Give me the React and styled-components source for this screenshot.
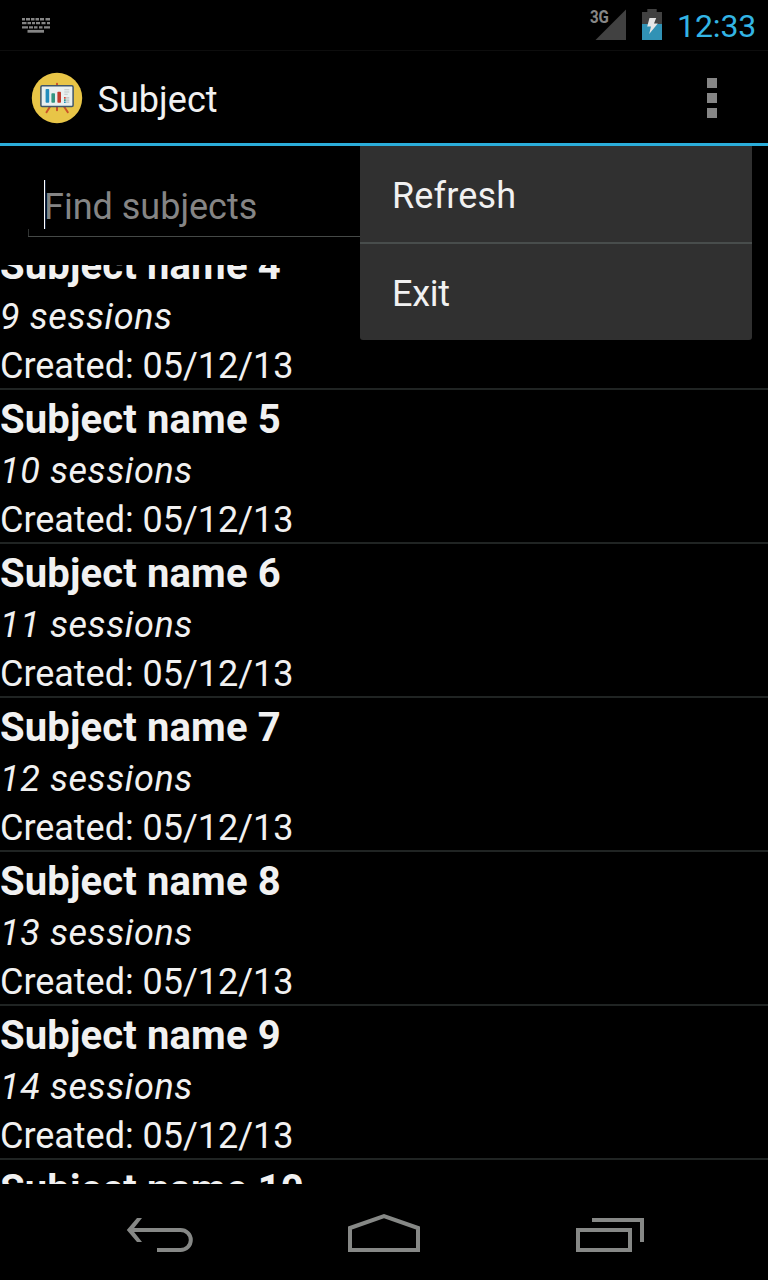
import React from "react";
import styled, { createGlobalStyle } from "styled-components";

const GlobalStyle = createGlobalStyle`
  body { margin: 0; background: #000; }
  * { box-sizing: border-box; }
`;

const Screen = styled.div`
  width: 768px;
  height: 1280px;
  display: flex;
  flex-direction: column;
  overflow: hidden;
  background: #000;
  color: #f1f1f1;
  font-family: Roboto, "Liberation Sans", sans-serif;
  font-size: 36px;
  line-height: 48px;
  white-space: nowrap;
`;

const StatusBar = styled.header`
  height: 51px;
  flex: none;
  display: flex;
  justify-content: space-between;
  border-bottom: 1px solid #0d0d0d;
  padding: 0 12px 0 22px;
`;

const StatusGroup = styled.div`
  display: flex;
  align-items: flex-start;
`;

const KeyboardIcon = styled.svg`
  display: block;
  margin-top: 17px;
`;

const Signal = styled.div`
  position: relative;
  width: 38px;
  height: 32px;
  margin: 9px 15px 0 0;
`;

const SignalIcon = styled.svg`
  display: block;
`;

const NetworkType = styled.span`
  position: absolute;
  left: 0.5px;
  top: -1px;
  font-size: 18px;
  line-height: 18px;
  font-weight: 700;
  letter-spacing: -0.2px;
  transform: scaleX(0.84);
  transform-origin: left;
  color: #868686;
`;

const BatteryIcon = styled.svg`
  display: block;
  margin: 9px 15px 0 0;
`;

const Clock = styled.time`
  width: 79px;
  font-size: 32px;
  line-height: 52px;
  letter-spacing: -0.1px;
  color: #33b5e5;
`;

const ActionBar = styled.div`
  height: 95px;
  flex: none;
  display: flex;
  align-items: flex-start;
  padding: 0 51px 0 31px;
  border-bottom: 3px solid #2badda;
`;

const Logo = styled.svg`
  display: block;
  margin-top: 21px;
`;

const Title = styled.h1`
  flex: 1;
  margin: 25px 0 0 14.5px;
  font-size: 36px;
  font-weight: 400;
  letter-spacing: 0.05px;
`;

const OverflowButton = styled.button`
  display: flex;
  flex-direction: column;
  gap: 5px;
  margin-top: 27px;
  padding: 0;
  border: 0;
  background: none;
`;

const Dot = styled.i`
  width: 10px;
  height: 10px;
  background: #868686;
`;

const Content = styled.main`
  position: relative;
  height: 1038px;
  flex: none;
  display: flex;
  flex-direction: column;
`;

const SearchArea = styled.div`
  height: 119px;
  flex: none;
  padding: 34px 28px 0;
`;

const SearchField = styled.div`
  height: 57px;
  padding-left: 16px;
  display: flex;
  color: #858585;
  background:
    linear-gradient(#454947, #454947) left bottom / 100% 1px no-repeat,
    linear-gradient(#303332, #303332) left bottom / 1px 8px no-repeat,
    linear-gradient(#303332, #303332) right bottom / 1px 8px no-repeat;
`;

const Caret = styled.i`
  width: 1px;
  height: 49px;
  margin-right: -1px;
  background: #fff;
  box-shadow: 1px 0 #17243b;
`;

const Placeholder = styled.span`
  padding-top: 3px;
`;

const List = styled.ul`
  height: 919px;
  margin: 0;
  padding: 0;
  overflow: hidden;
  list-style: none;
`;

const SubjectRow = styled.li`
  height: 154px;
  border-bottom: 2px solid #202423;

  &:first-child {
    margin-top: -29px;
  }
`;

const SubjectName = styled.div`
  height: 57px;
  font-size: 40px;
  line-height: 59px;
  font-weight: 700;
  letter-spacing: 0.14px;
`;

const Sessions = styled.div`
  height: 49px;
  font-style: italic;
  letter-spacing: 0.6px;
`;

const Created = styled.div`
  height: 46px;
  letter-spacing: -0.03px;
`;

const Menu = styled.div`
  position: absolute;
  top: 0;
  left: 360px;
  width: 392px;
  height: 194px;
  background: #303030;
  border-radius: 0 0 3px 3px;
`;

const MenuItem = styled.div`
  height: 98px;
  padding: 26px 32px 0;
  letter-spacing: ${(p) => p.$tracking}px;

  & + & {
    height: 96px;
  }

  &:first-child {
    border-bottom: 2px solid #484d4c;
  }
`;

const NavBar = styled.nav`
  height: 96px;
  flex: none;
  display: flex;
  align-items: flex-start;
  padding: 28px 0 0 126px;
`;

const NavIcon = styled.svg`
  display: block;
  flex: none;
  margin-right: ${(p) => p.$gap || 0}px;
  fill: none;
  stroke: #868886;
  stroke-width: 4;
`;

const subjects = [4, 5, 6, 7, 8, 9, 10].map((n) => ({
  name: `Subject name ${n}`,
  sessions: `${n + 5} sessions`,
  created: "Created: 05/12/13",
}));

const Keyboard = () => (
  <KeyboardIcon width="29" height="17" viewBox="0 0 29 17" fill="none" stroke="#858585">
    <path strokeWidth="2.5" d="M0 2.2H3M4 2.2H8M9 2.2H12.5M13.5 2.2H17M18 2.2H22M23.5 2.2H28" />
    <path strokeWidth="2.3" d="M0 6.2H4.5M5.5 6.2H9M10 6.2H13M14 6.2H18M19.5 6.2H23.5M25 6.2H28" />
    <path strokeWidth="2.3" d="M0 10.3H6M7 10.3H11M12 10.3H15.5M17 10.3H20.5M22 10.3H28" />
    <path strokeWidth="2.8" d="M5.5 14.3H22" />
  </KeyboardIcon>
);

const Battery = () => (
  <BatteryIcon width="20" height="31" viewBox="0 0 20 31">
    <path fill="#414141" d="M5.3 0H14.7V3H20V15H0V3H5.3Z" />
    <path fill="#3192b5" d="M0 15H20V31H0Z" />
    <path fill="#e6e6e6" d="M7.5 9H14.2L12 14.5H15.8L7.2 25L9 17.5H5.2Z" />
  </BatteryIcon>
);

const AppLogo = () => (
  <Logo width="52" height="52" viewBox="0 0 52 52">
    <circle cx="26" cy="26" r="25.2" fill="#e8c547" />
    <path d="M26 11.8V38.2M20 33L15.5 40.2M32 33L36.8 40.2" fill="none" stroke="#cb5228" strokeWidth="2" strokeLinecap="round" />
    <rect x="9.9" y="13.8" width="32.2" height="20.6" rx="1.2" fill="#e9f0ef" stroke="#40576a" strokeWidth="1.5" />
    <rect x="14.6" y="17" width="3.6" height="13.8" rx="0.8" fill="#238dbc" />
    <rect x="20.4" y="21.2" width="3.6" height="9.6" rx="0.8" fill="#359681" />
    <rect x="26.4" y="19.8" width="3.6" height="11" rx="0.8" fill="#c43b2c" />
    <path d="M33.3 17.8H38.3M33.3 20H38.3M33.3 22.2H36.7" stroke="#bfc6c6" strokeWidth="1.1" />
    <path d="M35 25.8H38.3M35 28.1H38.3M35 30.2H38.3" stroke="#b8bebe" strokeWidth="1.2" />
    <path d="M33 25H34.7V26.7H33Z" fill="#d44a38" />
    <path d="M33 27.2H34.7V28.9H33Z" fill="#359681" />
    <path d="M33 29.4H34.7V31H33Z" fill="#238dbc" />
  </Logo>
);

export default function App() {
  return (
    <Screen>
      <GlobalStyle />
      <StatusBar>
        <Keyboard />
        <StatusGroup>
          <Signal>
            <SignalIcon width="38" height="32" viewBox="0 0 38 32">
              <path d="M37 .5V31H6.5Z" fill="#414141" />
            </SignalIcon>
            <NetworkType>3G</NetworkType>
          </Signal>
          <Battery />
          <Clock>12:33</Clock>
        </StatusGroup>
      </StatusBar>
      <ActionBar>
        <AppLogo />
        <Title>Subject</Title>
        <OverflowButton aria-label="More options">
          <Dot />
          <Dot />
          <Dot />
        </OverflowButton>
      </ActionBar>
      <Content>
        <SearchArea>
          <SearchField>
            <Caret />
            <Placeholder>Find subjects</Placeholder>
          </SearchField>
        </SearchArea>
        <List>
          {subjects.map((s) => (
            <SubjectRow key={s.name}>
              <SubjectName>{s.name}</SubjectName>
              <Sessions>{s.sessions}</Sessions>
              <Created>{s.created}</Created>
            </SubjectRow>
          ))}
        </List>
        <Menu>
          <MenuItem $tracking={0.15}>Refresh</MenuItem>
          <MenuItem $tracking={-0.25}>Exit</MenuItem>
        </Menu>
      </Content>
      <NavBar>
        <NavIcon $gap={154} width="68" height="42" viewBox="0 0 68 42">
          <path d="M5 18H54.5A10.3 10 0 0 1 54.5 38H31" />
          <path d="M11 6H16L6.5 18L16 30H11L.8 18Z" fill="#868886" stroke="none" />
        </NavIcon>
        <NavIcon $gap={156} width="72" height="42" viewBox="0 0 72 42">
          <path d="M2 38V16L36 4.2L70 16V38Z" />
        </NavIcon>
        <NavIcon width="68" height="42" viewBox="0 0 68 42">
          <path d="M2 18H54V38H2ZM16 8H66V30" />
        </NavIcon>
      </NavBar>
    </Screen>
  );
}
